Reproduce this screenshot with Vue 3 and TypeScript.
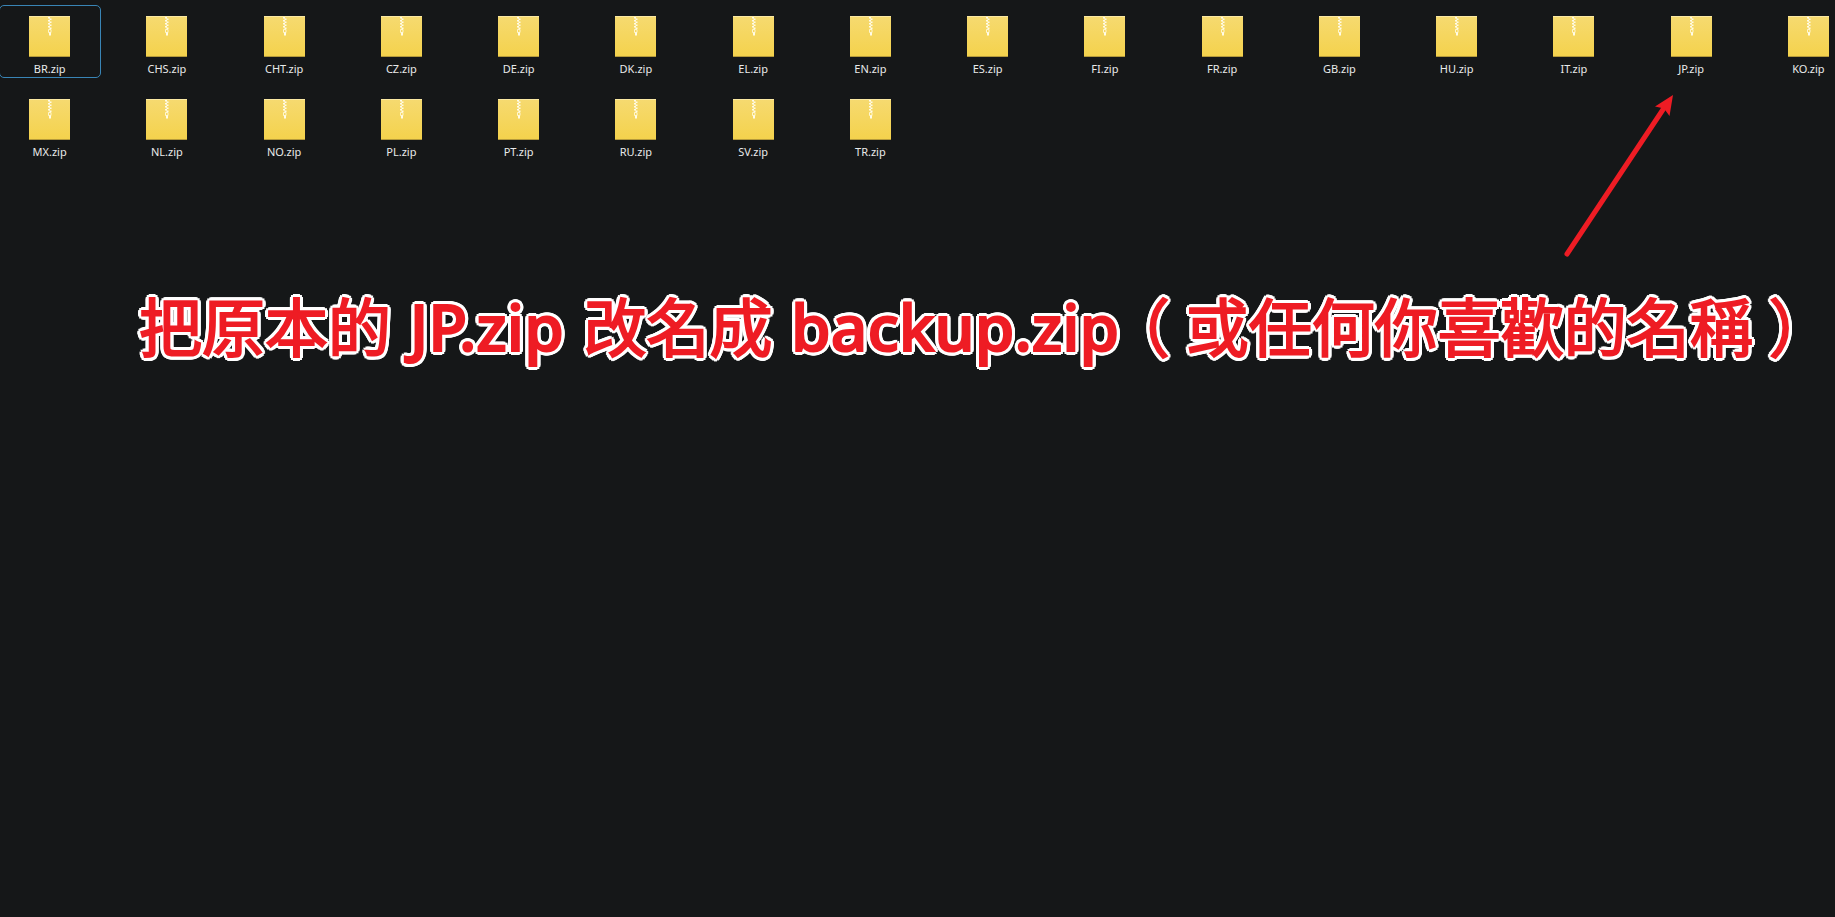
<script setup lang="ts">
import { ref } from 'vue'

const files: string[] = [
  'BR', 'CHS', 'CHT', 'CZ', 'DE', 'DK', 'EL', 'EN', 'ES', 'FI', 'FR', 'GB', 'HU', 'IT', 'JP', 'KO',
  'MX', 'NL', 'NO', 'PL', 'PT', 'RU', 'SV', 'TR',
].map((code) => `${code}.zip`)

const focused = ref('BR.zip')
</script>

<template>
  <main class="folder">
    <svg class="defs" aria-hidden="true">
      <defs>
        <linearGradient id="zip-fill" x1="0" y1="0" x2="0" y2="1">
          <stop offset="0" stop-color="#f6da70" />
          <stop offset="1" stop-color="#f4d24c" />
        </linearGradient>
      </defs>
    </svg>

    <ul class="files">
      <li v-for="file in files" :key="file">
        <button
          type="button"
          class="file"
          :class="{ focused: file === focused }"
          @click="focused = file"
        >
          <svg class="icon" viewBox="0 0 41 41" aria-hidden="true">
            <rect width="41" height="41" fill="url(#zip-fill)" />
            <rect width="41" height="1" fill="#fae8a2" />
            <rect y="40" width="41" height="1" fill="#b59a3b" />
            <path
              d="M19 1h2v1.500h-2zM20.500 2.500h2v1.500h-2zM19 4h2v1.500h-2zM20.500 5.500h2v1.500h-2zM19 7h2v1.500h-2zM20.500 8.500h2v1.500h-2zM19 10h2v1.500h-2zM20.500 11.500h2v1.500h-2z"
              fill="#fffbe8"
            />
            <path d="M19.500 13.500h2.500v3h-2.500z" fill="none" stroke="#fff6cf" />
            <path d="M20 16.500h2v3h-2z" fill="#fffbe8" />
          </svg>
          <span class="name">{{ file }}</span>
        </button>
      </li>
    </ul>

    <svg class="arrow" viewBox="0 0 120 170" aria-hidden="true">
      <path d="M7 164L106 15" stroke="#ee1c24" stroke-width="5" stroke-linecap="round" />
      <path d="M113 5L95 16.500L104 18.500L109.500 26Z" fill="#ee1c24" />
    </svg>

    <p class="note" lang="zh-Hant-TW">把原本的<span class="latin"> JP.zip </span>改名成<span class="latin"> backup.zip</span><span class="paren">（</span>或任何你喜歡的名稱<span class="paren">）</span></p>
  </main>
</template>

<style>
html,
body {
  background: #151718;
}
</style>

<style scoped>
.folder {
  position: relative;
  min-height: 100vh;
  overflow: hidden;
  background: #151718;
}

.defs {
  position: absolute;
  width: 0;
  height: 0;
}

.files {
  display: grid;
  grid-template-columns: repeat(16, 1fr);
  row-gap: 10px;
  margin: 0 -32px 0 -9px;
  padding: 5px 0 0;
  list-style: none;
}

.files li {
  display: flex;
  justify-content: center;
}

.file {
  display: flex;
  flex-direction: column;
  align-items: center;
  gap: 4px;
  box-sizing: border-box;
  width: 102px;
  height: 73px;
  padding: 10px 0 0;
  border: 1px solid transparent;
  border-radius: 5px;
  background: none;
  color: #e9eaea;
  font: 11px/16px "Noto Sans", "Open Sans", sans-serif;
}

.file.focused {
  border-color: #3985b6;
}

.icon {
  width: 41px;
  height: 41px;
}

.arrow {
  position: absolute;
  top: 90px;
  right: 155px;
  width: 120px;
  height: 170px;
  fill: none;
  pointer-events: none;
}

.note {
  margin: 116px 0 0;
  padding-left: 139px;
  white-space: nowrap;
  color: #ee1c24;
  font: 400 63px/94px "Noto Sans CJK TC", sans-serif;
  -webkit-text-stroke: 2px #ee1c24;
  text-shadow:
    4px 0 #fff, -4px 0 #fff, 0 4px #fff, 0 -4px #fff,
    3px 3px #fff, -3px 3px #fff, 3px -3px #fff, -3px -3px #fff,
    4px 1px #fff, 4px -1px #fff, -4px 1px #fff, -4px -1px #fff,
    1px 4px #fff, -1px 4px #fff, 1px -4px #fff, -1px -4px #fff,
    2px 0 #fff, -2px 0 #fff, 0 2px #fff, 0 -2px #fff;
}

.latin {
  margin: 0 3px 0 2px;
  font-family: "Noto Sans", "Open Sans", sans-serif;
  font-size: 64px;
  font-weight: 500;
}

.paren {
  margin: 0 16px;
  font-feature-settings: "halt";
}
</style>
